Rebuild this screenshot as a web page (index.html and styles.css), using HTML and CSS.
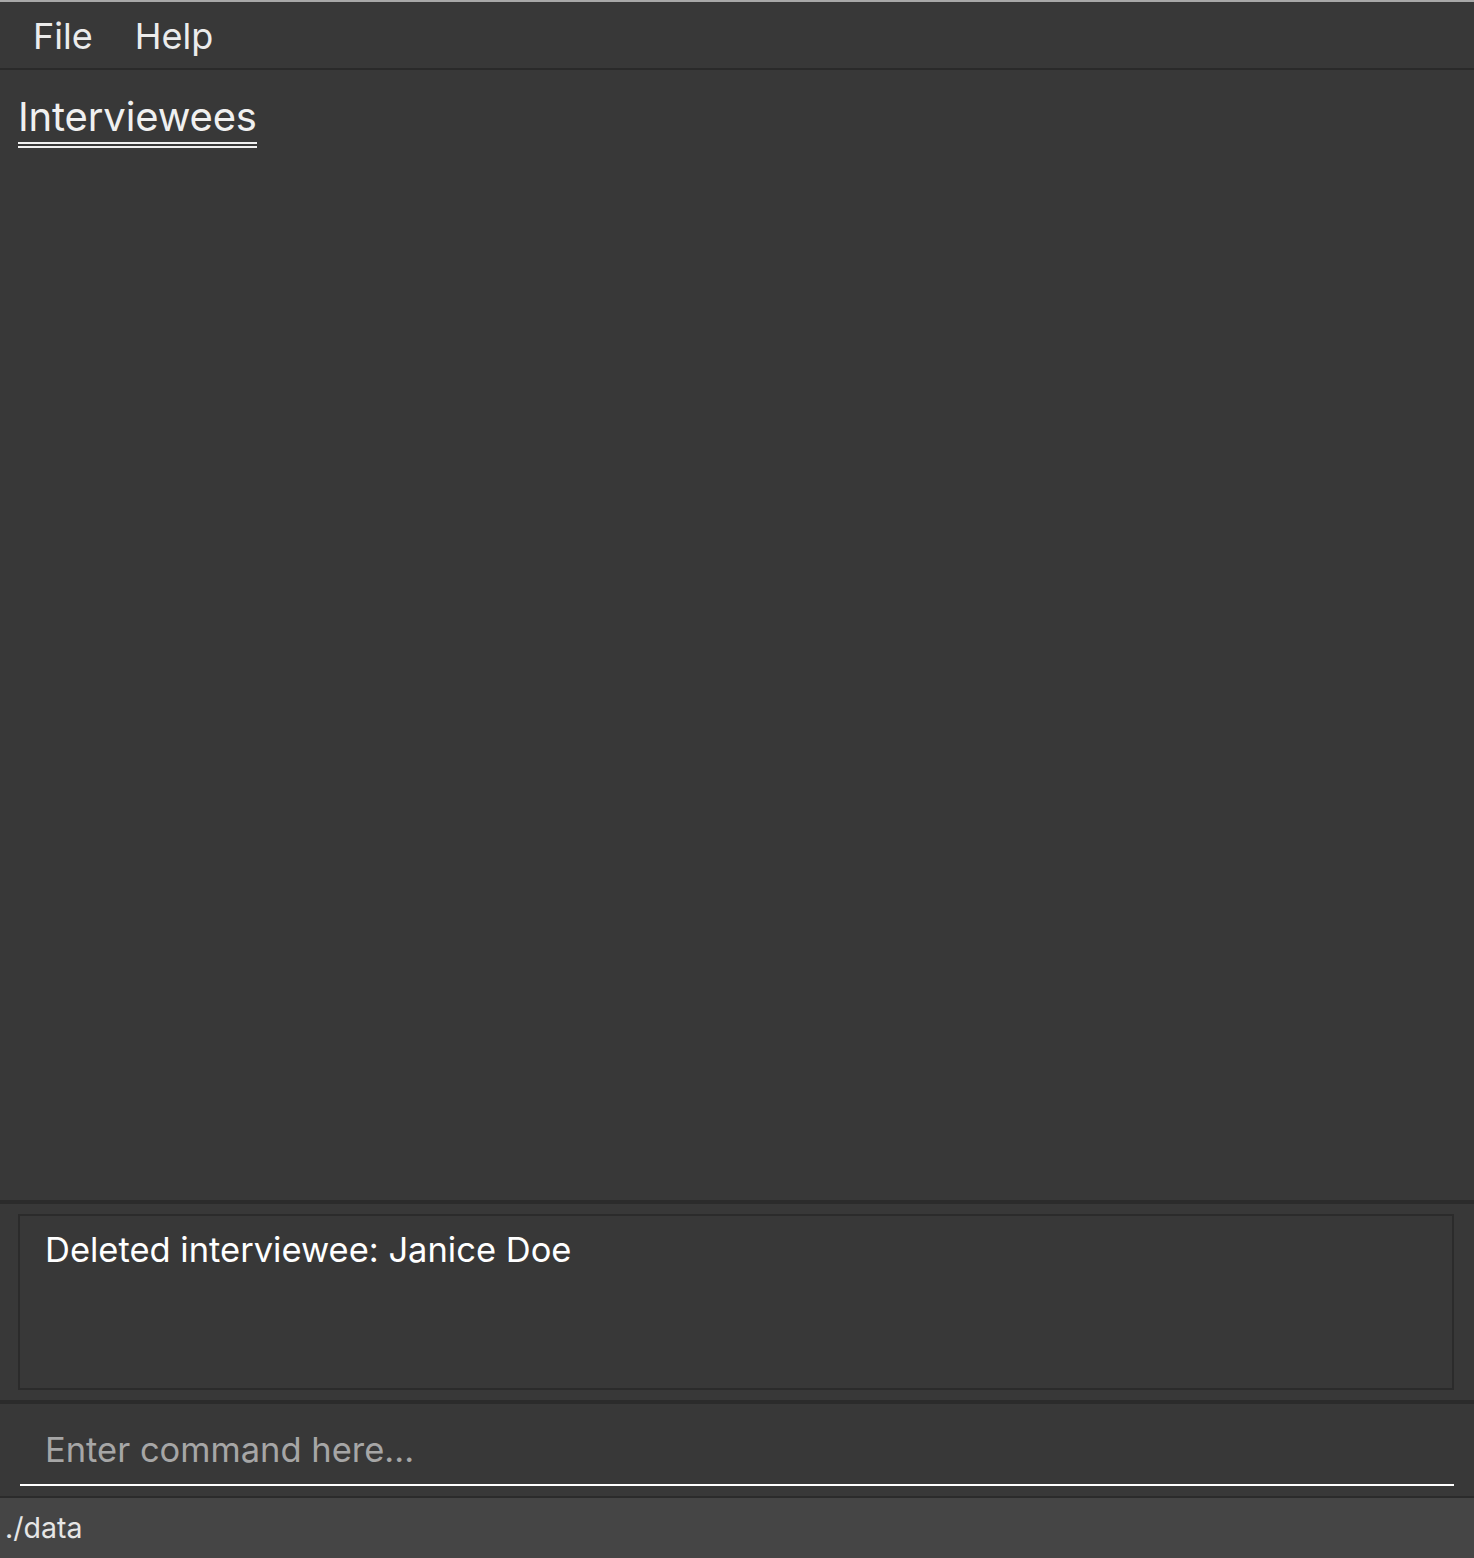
FILE: index.html
```html
<!DOCTYPE html>
<html lang="en">
<head>
<meta charset="utf-8">
<title>Interviewees</title>
<link rel="stylesheet" href="styles.css">
</head>
<body>
<div class="app">
  <div class="topline"></div>
  <nav class="menubar">
    <span class="menu-item">File</span>
    <span class="menu-item">Help</span>
  </nav>
  <main class="list-panel">
    <h1 class="tab-title">Interviewees</h1>
  </main>
  <div class="sep thick"></div>
  <section class="result-panel">
    <div class="result-box">Deleted interviewee: Janice Doe</div>
  </section>
  <div class="sep thick"></div>
  <section class="command-panel">
    <div class="command-field">Enter command here...</div>
  </section>
  <div class="sep thin"></div>
  <footer class="status-bar">./data</footer>
</div>
</body>
</html>
```
FILE: styles.css
```css
* { box-sizing: border-box; }
html, body {
  margin: 0;
  padding: 0;
  background: #383838;
}
.app {
  width: 1474px;
  height: 1558px;
  display: flex;
  flex-direction: column;
  font-family: "Inter", "Open Sans", sans-serif;
  color: #ffffff;
  background: #383838;
}
.topline {
  height: 2px;
  background: #a8a8a8;
}
.menubar {
  height: 68px;
  display: flex;
  align-items: center;
  gap: 42px;
  padding: 2px 0 0 33px;
  border-bottom: 2px solid #2a2a2a;
  background: #383838;
}
.menu-item {
  font-size: 36px;
  color: #ececec;
  line-height: 1;
}
.list-panel {
  flex: 1;
  padding: 0 18px;
  background: #383838;
}
.tab-title {
  display: inline-block;
  margin: 25px 0 0 0;
  padding: 0 0 3px 0;
  font-size: 40px;
  letter-spacing: -0.15px;
  font-weight: 400;
  line-height: 44px;
  color: #f0f0f0;
  border-bottom: 6px double #f0f0f0;
}
.sep { background: #2b2b2b; }
.sep.thick { height: 4px; }
.sep.thin { height: 2px; }
.result-panel {
  height: 196px;
  padding: 10px 20px 10px 18px;
  background: #383838;
}
.result-box {
  height: 100%;
  border: 2px solid #2b2b2b;
  padding: 12px 0 0 25px;
  font-size: 34.5px;
  line-height: 44px;
  color: #ffffff;
}
.command-panel {
  height: 92px;
  padding: 0 20px 0 20px;
  background: #383838;
}
.command-field {
  height: 82px;
  padding: 24px 0 0 25px;
  font-size: 34.5px;
  line-height: 44px;
  color: #a6a6a6;
  border-bottom: 2px solid #ffffff;
}
.status-bar {
  height: 60px;
  padding: 12px 0 0 5px;
  background: #454545;
  font-size: 28.5px;
  line-height: 36px;
  color: #e6e6e6;
}
```
